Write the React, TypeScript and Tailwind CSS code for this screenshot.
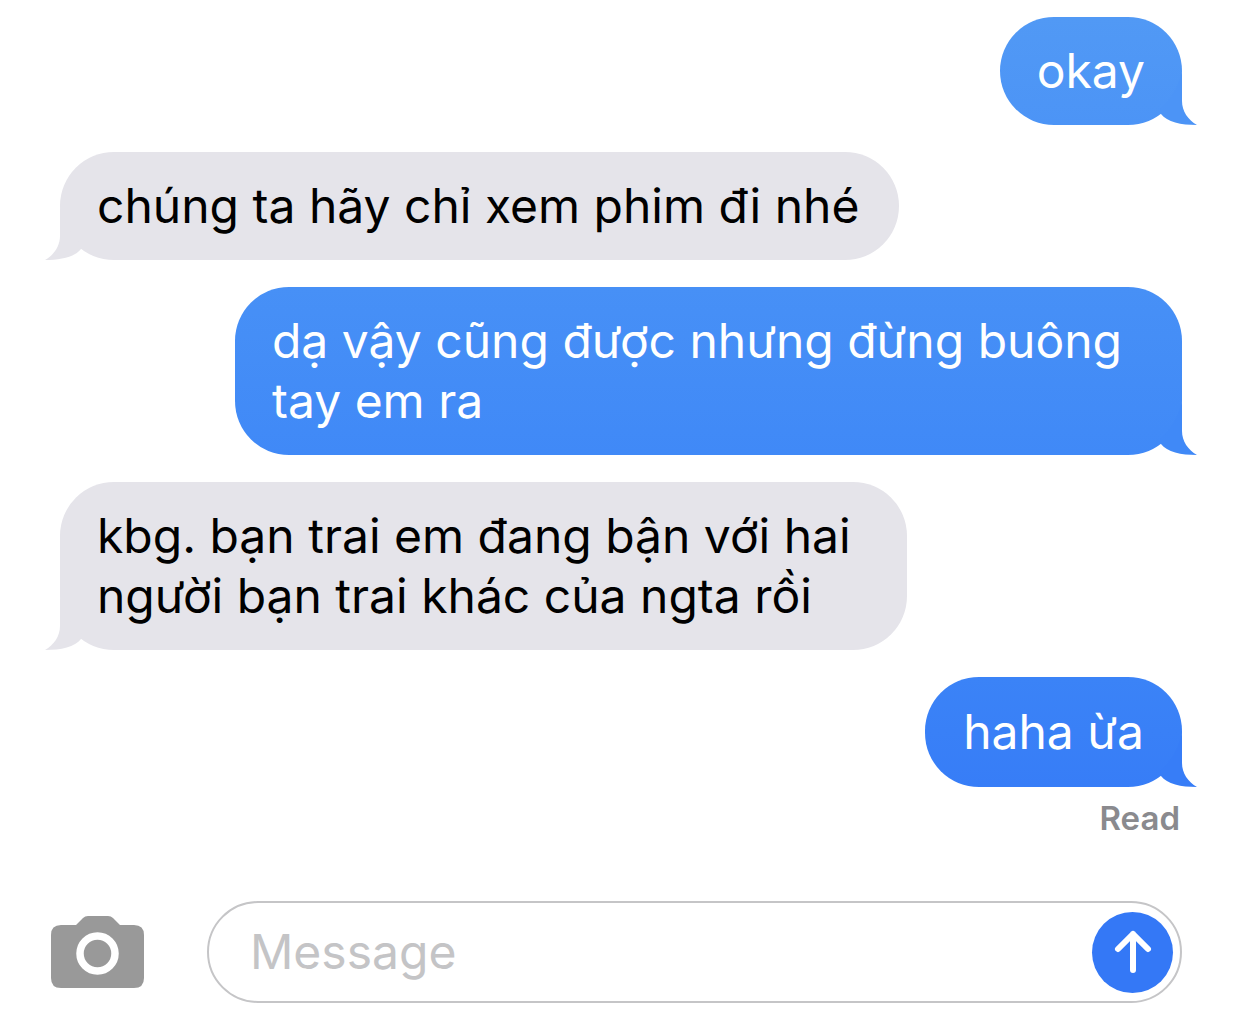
import { useState } from "react";

interface Message {
  id: number;
  from: "me" | "them";
  lines: string[];
  padding: string;
  fill: string;
  tail: string;
}

const MESSAGES: Message[] = [
  {
    id: 1,
    from: "me",
    lines: ["okay"],
    padding: "px-[37px] py-6",
    fill: "bg-linear-to-b from-[#5199f5] to-[#4c94f6]",
    tail: "text-[#4c94f6]",
  },
  {
    id: 2,
    from: "them",
    lines: ["chúng ta hãy chỉ xem phim đi nhé"],
    padding: "pr-10 pl-[37px] py-6",
    fill: "bg-[#e5e4ea]",
    tail: "text-[#e5e4ea]",
  },
  {
    id: 3,
    from: "me",
    lines: ["dạ vậy cũng được nhưng đừng buông", "tay em ra"],
    padding: "pr-[60px] pl-[37px] py-6",
    fill: "bg-linear-to-b from-[#4790f6] to-[#4089f7]",
    tail: "text-[#4089f7]",
  },
  {
    id: 4,
    from: "them",
    lines: ["kbg. bạn trai em đang bận với hai", "người bạn trai khác của ngta rồi"],
    padding: "pr-14 pl-[37px] py-6",
    fill: "bg-[#e5e4ea]",
    tail: "text-[#e5e4ea]",
  },
  {
    id: 5,
    from: "me",
    lines: ["haha ừa"],
    padding: "px-[38px] py-[25px]",
    fill: "bg-linear-to-b from-[#3b83f7] to-[#377df7]",
    tail: "text-[#377df7]",
  },
];

function Tail({ mine, className }: { mine: boolean; className: string }) {
  return (
    <svg
      viewBox="0 0 40 54"
      className={`absolute bottom-0 h-[54px] w-10 ${mine ? "-right-[15px]" : "-left-[15px] -scale-x-100"} ${className}`}
      fill="currentColor"
      aria-hidden="true"
    >
      <path d="M25 0V30C25 40 31 49 40 54C24 54 10 51 4 43L3 38Q20 24 25 0Z" />
    </svg>
  );
}

function Bubble({ message }: { message: Message }) {
  const mine = message.from === "me";
  return (
    <li
      className={`relative rounded-[54px] text-5xl leading-[60px] ${message.padding} ${message.fill} ${
        mine ? "self-end text-white" : "self-start text-black"
      }`}
    >
      <Tail mine={mine} className={message.tail} />
      <p className="relative">
        {message.lines.map((line) => (
          <span key={line} className="block whitespace-nowrap">
            {line}
          </span>
        ))}
      </p>
    </li>
  );
}

export default function App() {
  const [draft, setDraft] = useState("");

  return (
    <main className="min-h-screen bg-white pt-[17px] font-['Inter','Noto_Sans',sans-serif]">
      <ul className="flex flex-col gap-[27px] px-[60px]">
        {MESSAGES.map((message) => (
          <Bubble key={message.id} message={message} />
        ))}
      </ul>
      <p className="mt-[11px] pr-[62px] text-right text-[33px] leading-10 font-semibold text-[#8a8a8e]">Read</p>

      <form className="mt-[63px] flex items-center pr-[60px] pl-[51px]" onSubmit={(e) => e.preventDefault()}>
        <button type="button" aria-label="Camera" className="shrink-0">
          <svg viewBox="0 0 93 72" className="h-[72px] w-[93px]" aria-hidden="true">
            <path
              fill="#999999"
              d="M10 9H25L32 2Q34 0 37 0H57Q60 0 62 2L69 9H83Q93 9 93 19V62Q93 72 83 72H10Q0 72 0 62V19Q0 9 10 9Z"
            />
            <circle cx="46.5" cy="37.5" r="17.5" fill="none" stroke="white" strokeWidth="7.5" />
          </svg>
        </button>
        <div className="ml-[63px] flex h-[102px] min-w-0 flex-1 items-center rounded-full border-2 border-[#c5c5c7] pr-[7px] pl-[41px]">
          <input
            type="text"
            aria-label="Message"
            placeholder="Message"
            value={draft}
            onChange={(e) => setDraft(e.target.value)}
            className="min-w-0 flex-1 bg-transparent text-5xl leading-[60px] outline-none placeholder:text-[#c4c4c6]"
          />
          <button
            type="submit"
            aria-label="Send"
            className="flex size-[81px] shrink-0 items-center justify-center rounded-full bg-[#3478f6]"
          >
            <svg
              viewBox="0 0 40 46"
              className="h-[46px] w-10"
              fill="none"
              stroke="white"
              strokeWidth="6"
              strokeLinecap="round"
              strokeLinejoin="round"
              aria-hidden="true"
            >
              <path d="M20 41V5M5 20L20 5L35 20" />
            </svg>
          </button>
        </div>
      </form>
    </main>
  );
}
